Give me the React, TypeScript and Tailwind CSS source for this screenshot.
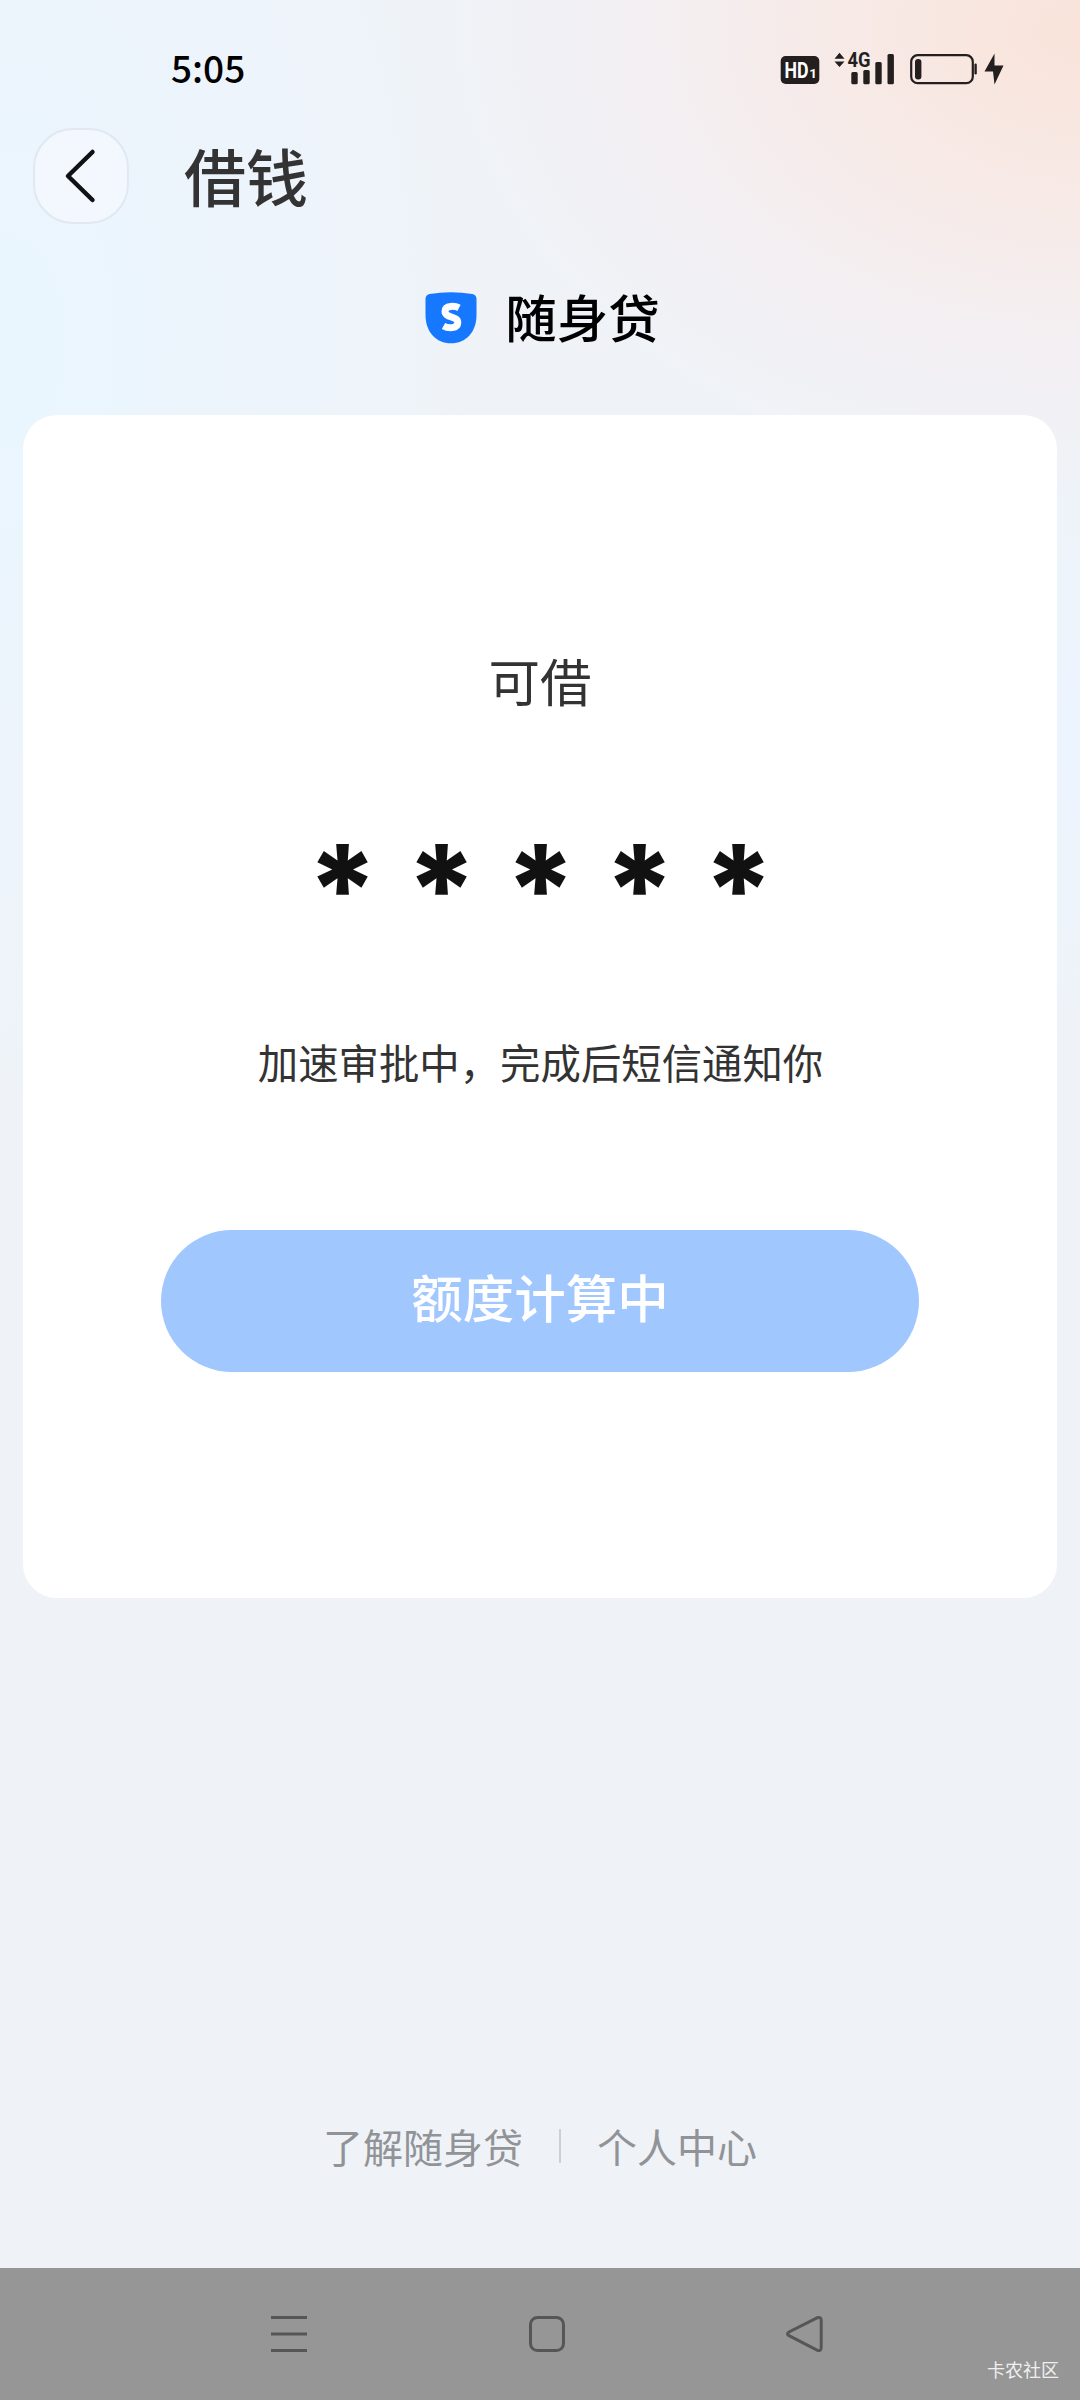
import { ReactNode } from "react";

const StatusIcons = () => (
  <svg width="226" height="52" viewBox="780 43 226 52" fill="#231f1e">
    {/* HD badge */}
    <rect x="780.7" y="56" width="38.6" height="28" rx="5" />
    <text
      x="784.5"
      y="78"
      fill="#fff"
      fontFamily="Roboto"
      fontSize="21.500"
      fontWeight="700"
      textLength="24"
      lengthAdjust="spacingAndGlyphs"
    >
      HD
    </text>
    <text x="809.3" y="78.3" fill="#fff" fontFamily="Roboto" fontSize="13.500" fontWeight="700">
      1
    </text>
    {/* mobile signal */}
    <path d="M839.5 52.8l5 6h-10z M839.5 67l5-5.500h-10z" />
    <text
      x="847.5"
      y="67.3"
      fontFamily="Roboto"
      fontSize="20.5"
      fontWeight="700"
      textLength="23"
      lengthAdjust="spacingAndGlyphs"
    >
      4G
    </text>
    <rect x="851.3" y="72" width="6.4" height="12.3" rx="1.5" />
    <rect x="863.3" y="70" width="6.4" height="14.3" rx="1.5" />
    <rect x="875.3" y="62" width="6.4" height="22.3" rx="1.5" />
    <rect x="887.5" y="54" width="6.4" height="30.3" rx="1.5" />
    {/* battery */}
    <rect x="911.2" y="55.2" width="61.6" height="28" rx="6.5" fill="none" stroke="#231f1e" strokeWidth="2.2" />
    <rect x="915" y="59" width="6.4" height="20.4" rx="3" />
    <rect x="974.4" y="63.5" width="2.4" height="11" rx="1.2" />
    <path d="M994.500 53.500L984.500 71.500h8.500L994.500 84.500 1003.500 65.500h-9z" />
  </svg>
);

const Logo = () => (
  <svg width="52" height="52" viewBox="0 0 52 52">
    <path
      d="M4.500 2Q26-1.500 47.500 2Q51.500 3 51.500 7V23C51.500 40 41 51.300 26 51.300S.5 40 .5 23V7Q.5 3 4.500 2Z"
      fill="#1677ff"
    />
    <path
      d="M34 15.800C30.500 14 20 12.800 20 19.500C20 26 32.800 24 32.800 30.500C32.800 37 23 36.500 18.500 34"
      fill="none"
      stroke="#fff"
      strokeWidth="7"
    />
  </svg>
);

const NavButton = ({ children }: { children: ReactNode }) => (
  <button className="flex h-10 w-10 items-center justify-center">
    <svg width="40" height="40" viewBox="0 0 40 40" fill="none" stroke="#565656" strokeWidth="3">
      {children}
    </svg>
  </button>
);

const App = () => {
  return (
    <div className="flex h-[2400px] w-[1080px] flex-col overflow-hidden bg-[#eff3f8] bg-[radial-gradient(ellipse_640px_460px_at_1080px_30px,#f9e3da_0%,#fae6dfcc_30%,#f8eaea80_65%,#f3f0f300_100%),radial-gradient(ellipse_240px_300px_at_1080px_740px,#ecf4fe_0%,#eff3f800_100%),radial-gradient(ellipse_480px_800px_at_0px_340px,#e9f6fe_0%,#ebf5fea0_45%,#eff3f800_100%)] font-['Noto_Sans_CJK_SC',sans-serif] text-[#333]">
      <div className="flex h-32 shrink-0 items-start justify-between pt-[43px] pr-[74px] pl-[171px]">
        <span className="mt-[8px] text-[37px] leading-8 font-medium text-black">5:05</span>
        <StatusIcons />
      </div>

      <header className="flex h-24 shrink-0 items-center px-[33px]">
        <button className="flex h-24 w-24 items-center justify-center rounded-[40px] border-2 border-[#e1e8f0] bg-[#f3f8fe]">
          <svg width="40" height="60" viewBox="0 0 40 60" fill="none" stroke="#101214" strokeWidth="4.500">
            <path d="M31.500 6L7 30L31.500 54" strokeLinecap="round" strokeLinejoin="round" />
          </svg>
        </button>
        <h1 className="-mt-[3px] ml-[55px] text-[62px] leading-none font-medium">借钱</h1>
      </header>

      <div className="mt-[68px] flex h-[51px] shrink-0 items-center justify-center gap-[28px] pl-[5px]">
        <Logo />
        <h2 className="-mt-[4px] text-[51.500px] leading-none font-medium text-black">随身贷</h2>
      </div>

      <main className="mx-[23px] mt-[72px] flex h-[1183px] shrink-0 flex-col items-center rounded-[34px] bg-white pt-[235px]">
        <p className="text-[51.500px] leading-[60px]">可借</p>
        <div className="mt-[129px] flex h-[60px] pl-px font-['Inter',sans-serif] text-[124px] leading-[101px] font-extrabold text-[#111]">
          {[0, 1, 2, 3, 4].map((i) => (
            <span key={i} className="w-[99px] text-center">
              *
            </span>
          ))}
        </div>
        <p className="mt-[133px] pl-px text-[40.400px] leading-[60px]">加速审批中，完成后短信通知你</p>
        <button className="mt-[138px] h-[142px] w-[758px] rounded-full bg-[#a1c7ff] pb-[10px] text-[51.500px] font-medium text-white">
          额度计算中
        </button>
      </main>

      <footer className="mt-auto mb-[92px] flex items-center justify-center text-[40px] leading-[60px] text-[#919397]">
        <span>了解随身贷</span>
        <span className="mx-[36px] h-[34px] w-[2px] bg-[#cdd0d5]" />
        <span>个人中心</span>
      </footer>

      <nav className="relative flex h-[132px] shrink-0 items-center justify-between bg-[#969696] pr-[255px] pl-[269px]">
        <NavButton>
          <path d="M2 3.500H38M2 20H38M2 36.500H38" />
        </NavButton>
        <NavButton>
          <rect x="3.500" y="3.500" width="33" height="33" rx="7" />
        </NavButton>
        <NavButton>
          <path d="M32 3.800L4 18Q1 20 4 21.700L32 36.200Q36.200 37.500 36.200 33.500V6.500Q36.200 2.500 32 3.800Z" />
        </NavButton>
        <span className="absolute right-[21px] bottom-[19px] text-[18px] leading-6 text-[#f0f0f0]">卡农社区</span>
      </nav>
    </div>
  );
};

export default App;
